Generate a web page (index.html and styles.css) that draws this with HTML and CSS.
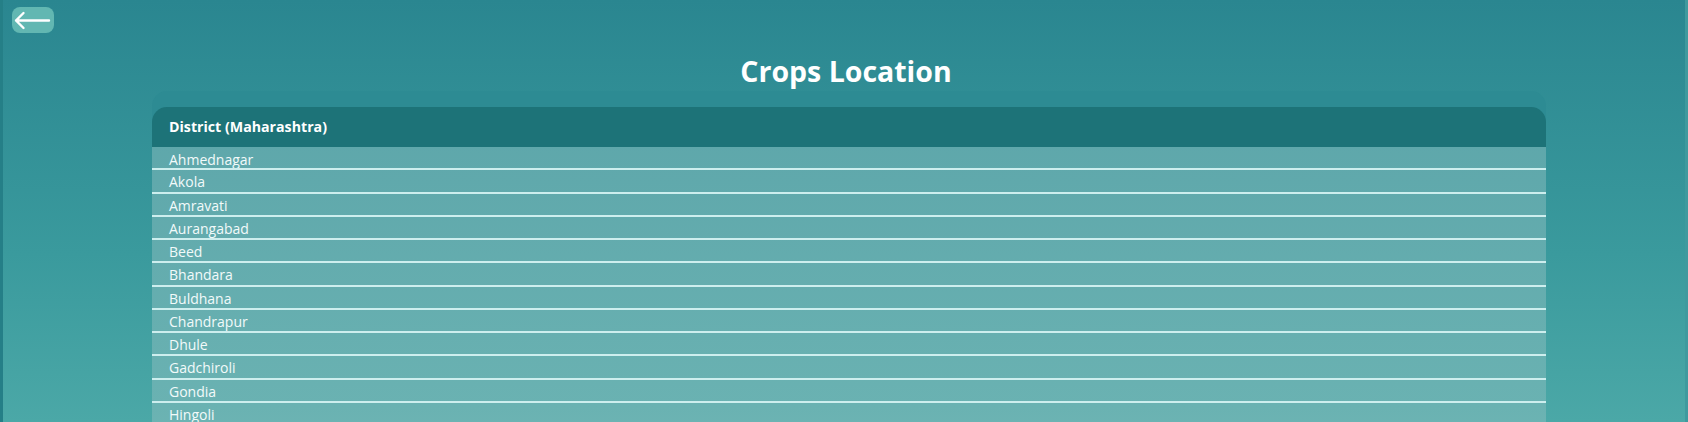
FILE: index.html
```html
<!DOCTYPE html>
<html lang="en">
	<head>
		<title>Crops Location</title>
		<meta charset="utf-8" />
		<link rel="stylesheet" href="styles.css">
	</head>

	<body>
		<div class="page">
			<!-- back button -->
			<div class="topbar">
				<button class="back" type="button" aria-label="Back">
					<svg width="42" height="26" viewBox="0 0 42 26">
						<path d="M4 13.5 H37 M11.5 6 L4 13.5 L11.5 21" fill="none" stroke="#fff" stroke-width="2.4" stroke-linecap="round" stroke-linejoin="round" />
					</svg>
				</button>
			</div>

			<h1 class="title">Crops Location</h1>

			<!-- district list -->
			<div class="table">
				<div class="head">District (Maharashtra)</div>
				<div class="row first">Ahmednagar</div>
				<div class="row">Akola</div>
				<div class="row">Amravati</div>
				<div class="row">Aurangabad</div>
				<div class="row">Beed</div>
				<div class="row">Bhandara</div>
				<div class="row">Buldhana</div>
				<div class="row">Chandrapur</div>
				<div class="row">Dhule</div>
				<div class="row">Gadchiroli</div>
				<div class="row">Gondia</div>
				<div class="row">Hingoli</div>
			</div>
		</div>
	</body>
</html>
```

FILE: styles.css
```css
/* whole screen is one teal gradient */
html,
body {
	margin: 0;
	height: 100%;
	overflow: hidden;
}

body {
	font-family: "Open Sans", "Noto Sans", sans-serif;
	color: #fff;
	background: linear-gradient(180deg, #2a8690 0%, #3a9a9d 60%, #4ba8a7 100%);
}

.page {
	height: 100%;
	border-left: 3px solid #257f87;
	border-right: 3px solid #3f9a9e;
	box-sizing: border-box;
}

.topbar {
	padding: 7px 0 0 9px;
	height: 26px;
}

.back {
	display: block;
	width: 42px;
	height: 26px;
	padding: 0;
	border: none;
	border-radius: 8px;
	background: #62b7b2;
}

.back svg {
	display: block;
}

.title {
	margin: 19px 0 0 0;
	padding-left: 4px;
	text-align: center;
	font-size: 28.5px;
	font-weight: 700;
	line-height: 38px;
}

/* table card */
.table {
	margin: 17px 0 0 149px;
	width: 1394px;
	background: linear-gradient(180deg, #5da6aa 0px, #6ab2b2 300px, #74bab7 400px);
}

.head {
	height: 40px;
	line-height: 40px;
	padding-left: 17px;
	font-size: 14.2px;
	font-weight: 700;
	background: #1d7378;
	border-radius: 15px 15px 0 0;
	/* cover the table gradient above the rounded corners */
	box-shadow: 0 -16px 0 0 #2d8b93;
}

.row {
	height: 20.25px;
	line-height: 21.25px;
	padding: 1px 0 0 17px;
	font-size: 14px;
	color: #f2fafa;
	border-bottom: 2px solid #cdeeee;
	overflow: hidden;
}

.row.first {
	padding-top: 2px;
	height: 19.25px;
}
```
